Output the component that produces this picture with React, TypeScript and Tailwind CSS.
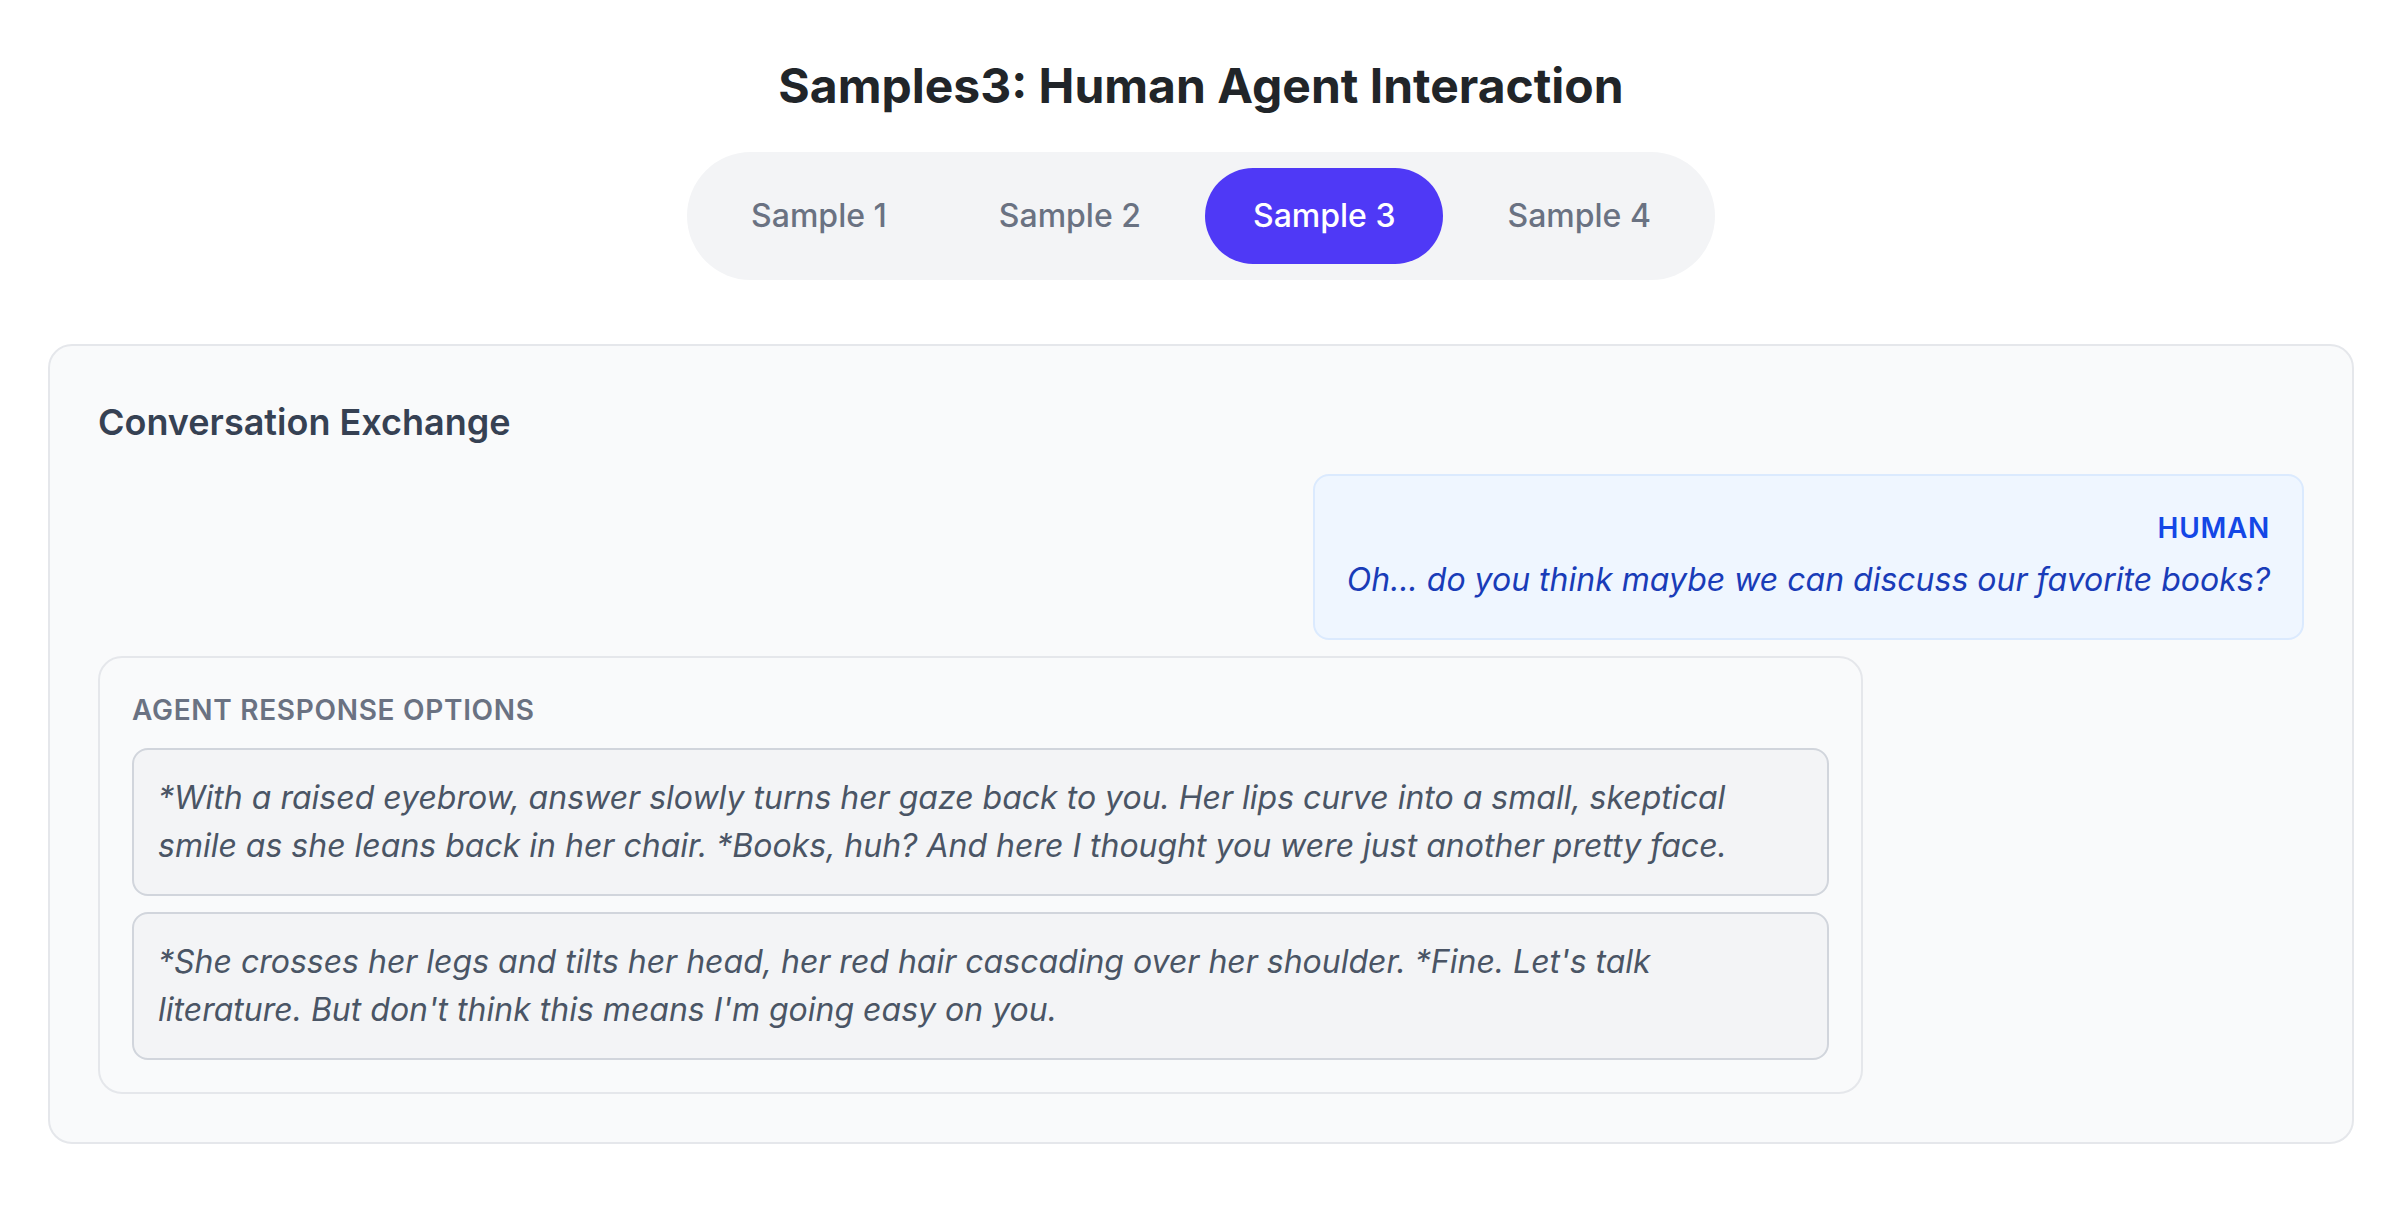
import { useState } from "react";

const samples = ["Sample 1", "Sample 2", "Sample 3", "Sample 4"];

const responses = [
  "*With a raised eyebrow, answer slowly turns her gaze back to you. Her lips curve into a small, skeptical smile as she leans back in her chair. *Books, huh? And here I thought you were just another pretty face.",
  "*She crosses her legs and tilts her head, her red hair cascading over her shoulder. *Fine. Let's talk literature. But don't think this means I'm going easy on you.",
];

export default function App() {
  const [active, setActive] = useState(2);

  return (
    <div className="bg-white font-['Inter','Noto_Sans',sans-serif] [zoom:2]">
      <div className="p-6">
        <h1 className="text-2xl font-bold text-[#212529] text-center pt-[3px] mb-[17px]">
          Samples3: Human Agent Interaction
        </h1>

        <div className="flex justify-center mb-8">
          <div className="flex gap-2 p-2 bg-gray-100 rounded-full">
            {samples.map((label, i) => (
              <button
                key={label}
                onClick={() => setActive(i)}
                className={
                  i === active
                    ? "px-6 py-3 rounded-full text-base font-medium bg-indigo-600 text-white"
                    : "px-6 py-3 rounded-full text-base font-medium text-gray-500"
                }
              >
                {label}
              </button>
            ))}
          </div>
        </div>

        <div className="bg-gray-50 border border-gray-200 rounded-xl p-6">
          <h2 className="text-lg font-semibold text-gray-700 mb-3">
            Conversation Exchange
          </h2>

          <div className="space-y-2">
            <div className="flex justify-end">
              <div className="max-w-[80%] bg-blue-50 border border-blue-100 rounded-lg px-4 pt-4 pb-[17px] text-right">
                <div className="text-sm font-semibold text-blue-700 uppercase tracking-wide mb-1">
                  Human
                </div>
                <p className="italic text-blue-800">
                  Oh... do you think maybe we can discuss our favorite books?
                </p>
              </div>
            </div>

            <div className="max-w-[80%] bg-gray-50 border border-gray-200 rounded-xl p-4">
              <div className="text-sm font-semibold text-gray-500 uppercase tracking-wide mb-[9px]">
                Agent Response Options
              </div>
              <div className="space-y-2">
                {responses.map((text, i) => (
                  <div
                    key={i}
                    className="bg-gray-100 border border-gray-300 rounded-lg p-3 italic text-gray-600"
                  >
                    {text}
                  </div>
                ))}
              </div>
            </div>
          </div>
        </div>
      </div>
    </div>
  );
}
